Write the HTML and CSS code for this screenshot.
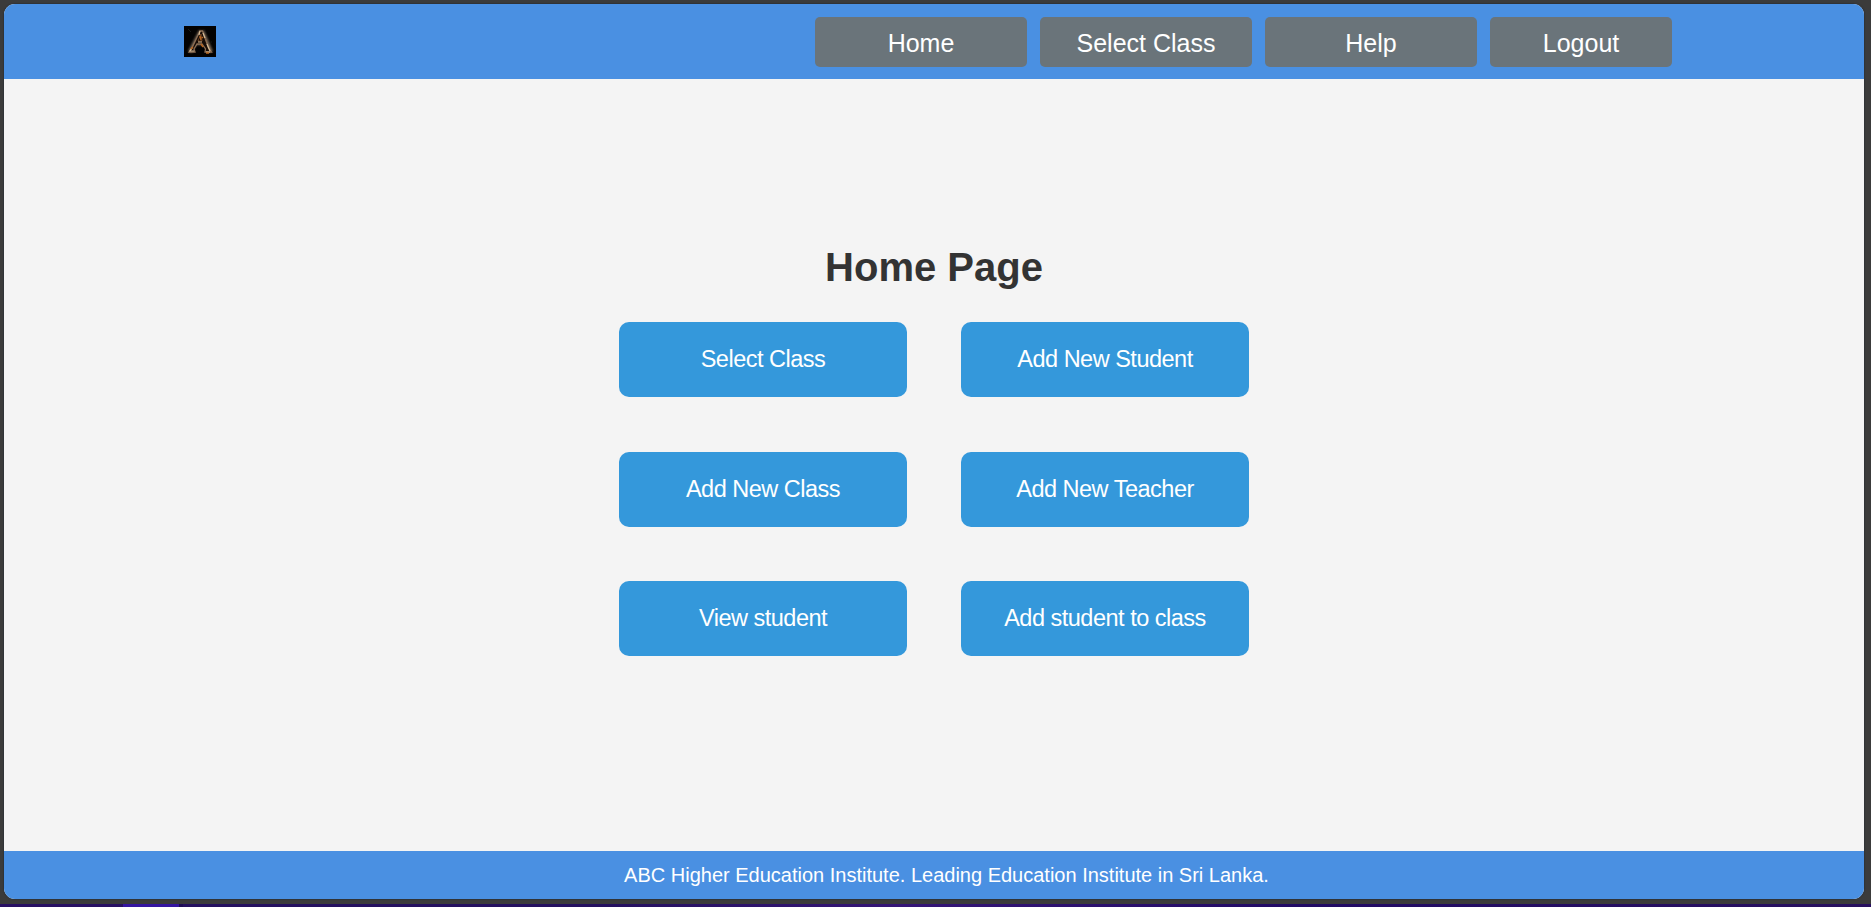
FILE: index.html
```
<!DOCTYPE html>
<html lang="en">
<head>
<meta charset="utf-8">
<title>Home Page</title>
<link rel="stylesheet" href="styles.css">
</head>
<body>
<div class="window">
  <header class="header">
    <svg class="logo" viewBox="0 0 32 31" role="img" aria-label="Logo">
      <defs><filter id="glow" x="-30%" y="-30%" width="160%" height="160%"><feGaussianBlur stdDeviation="1.3"/></filter></defs>
      <rect width="32" height="31" fill="#030202"/>
      <path d="M17 5L6 26M18 5L27 26M12 17H21" stroke="#7b6a5a" stroke-width="4" fill="none" filter="url(#glow)"/>
      <path d="M16 5L18.500 5L24.500 22L27.500 26H21L21.500 23L18 18H13L10 23L11 26H5L8 22Z" stroke="#8b6d53" stroke-width="1.3" fill="#160c07"/>
      <path d="M17 8L14 15H18Z" stroke="#87502a" stroke-width="0.8" fill="#0b0705"/>
      <path d="M16 5L15 9M19 7L21 12M23 18L26 25M8 22L6 25H10M22 26H26M14 16H18" stroke="#d3b894" stroke-width="1.2" fill="none"/>
      <path d="M16 10L17 14M18 12L19 11M17 18L19 21M9 21L7 23M22 27H25" stroke="#b8651f" stroke-width="1.4" fill="none"/>
      <path d="M4 3L7 6M27 16H28" stroke="#171b1b" fill="none"/>
    </svg>
    <nav class="nav">
      <a class="nav-link">Home</a>
      <a class="nav-link">Select Class</a>
      <a class="nav-link">Help</a>
      <a class="nav-link nav-link-logout">Logout</a>
    </nav>
  </header>
  <main class="main">
    <h1 class="title">Home Page</h1>
    <div class="cards">
      <a class="card">Select Class</a>
      <a class="card">Add New Student</a>
      <a class="card">Add New Class</a>
      <a class="card">Add New Teacher</a>
      <a class="card">View student</a>
      <a class="card">Add student to class</a>
    </div>
  </main>
  <footer class="footer">ABC Higher Education Institute. Leading Education Institute in Sri Lanka.</footer>
</div>
<div class="desktop-edge"></div>
</body>
</html>
```
FILE: styles.css
```
* { box-sizing: border-box; }
body {
  margin: 0;
  height: 907px;
  overflow: hidden;
  padding: 4px 7px 0 4px;
  background: #3b3b3b;
  font-family: "Liberation Sans", Arial, sans-serif;
}
.window {
  height: 895px;
  display: flex;
  flex-direction: column;
  border-radius: 11px;
  overflow: hidden;
  background: #f4f4f4;
  box-shadow: 0 0 1px 1px #303338;
}
.header {
  height: 75px;
  flex: none;
  display: flex;
  justify-content: space-between;
  align-items: flex-start;
  padding: 13px 192px 0 180px;
  background: #4a90e2;
}
.logo { width: 32px; height: 31px; margin-top: 9px; }
.nav { display: flex; gap: 13px; }
.nav-link {
  width: 212px;
  height: 50px;
  padding-top: 1px;
  border-radius: 5px;
  background: #6a747a;
  color: #fff;
  font-size: 25px;
  line-height: 50px;
  text-align: center;
}
.nav-link-logout { width: 182px; }
.main {
  flex: 1;
  display: flex;
  flex-direction: column;
  align-items: center;
  padding-top: 165px;
}
.title {
  margin: 0;
  height: 78px;
  font-size: 40px;
  line-height: 46px;
  color: #333;
}
.cards {
  display: grid;
  grid-template-columns: 288px 288px;
  grid-auto-rows: 75px;
  gap: 54.5px 54px;
}
.card {
  border-radius: 10px;
  background: #3498db;
  color: #fff;
  font-size: 23.5px;
  letter-spacing: -0.5px;
  line-height: 75px;
  text-align: center;
}
.footer {
  height: 48px;
  flex: none;
  padding-left: 25px;
  background: #4a90e2;
  color: #fff;
  font-size: 20px;
  line-height: 48px;
  text-align: center;
}
.desktop-edge {
  height: 3px;
  margin: 5px -7px 0 -4px;
  background: linear-gradient(90deg, #281063 0 123px, #3415a0 123px 179px, #1d0b55 179px 183px, #24105f 183px 600px, #351577 900px, #210a65 1300px, #28105f 100%);
}
```
